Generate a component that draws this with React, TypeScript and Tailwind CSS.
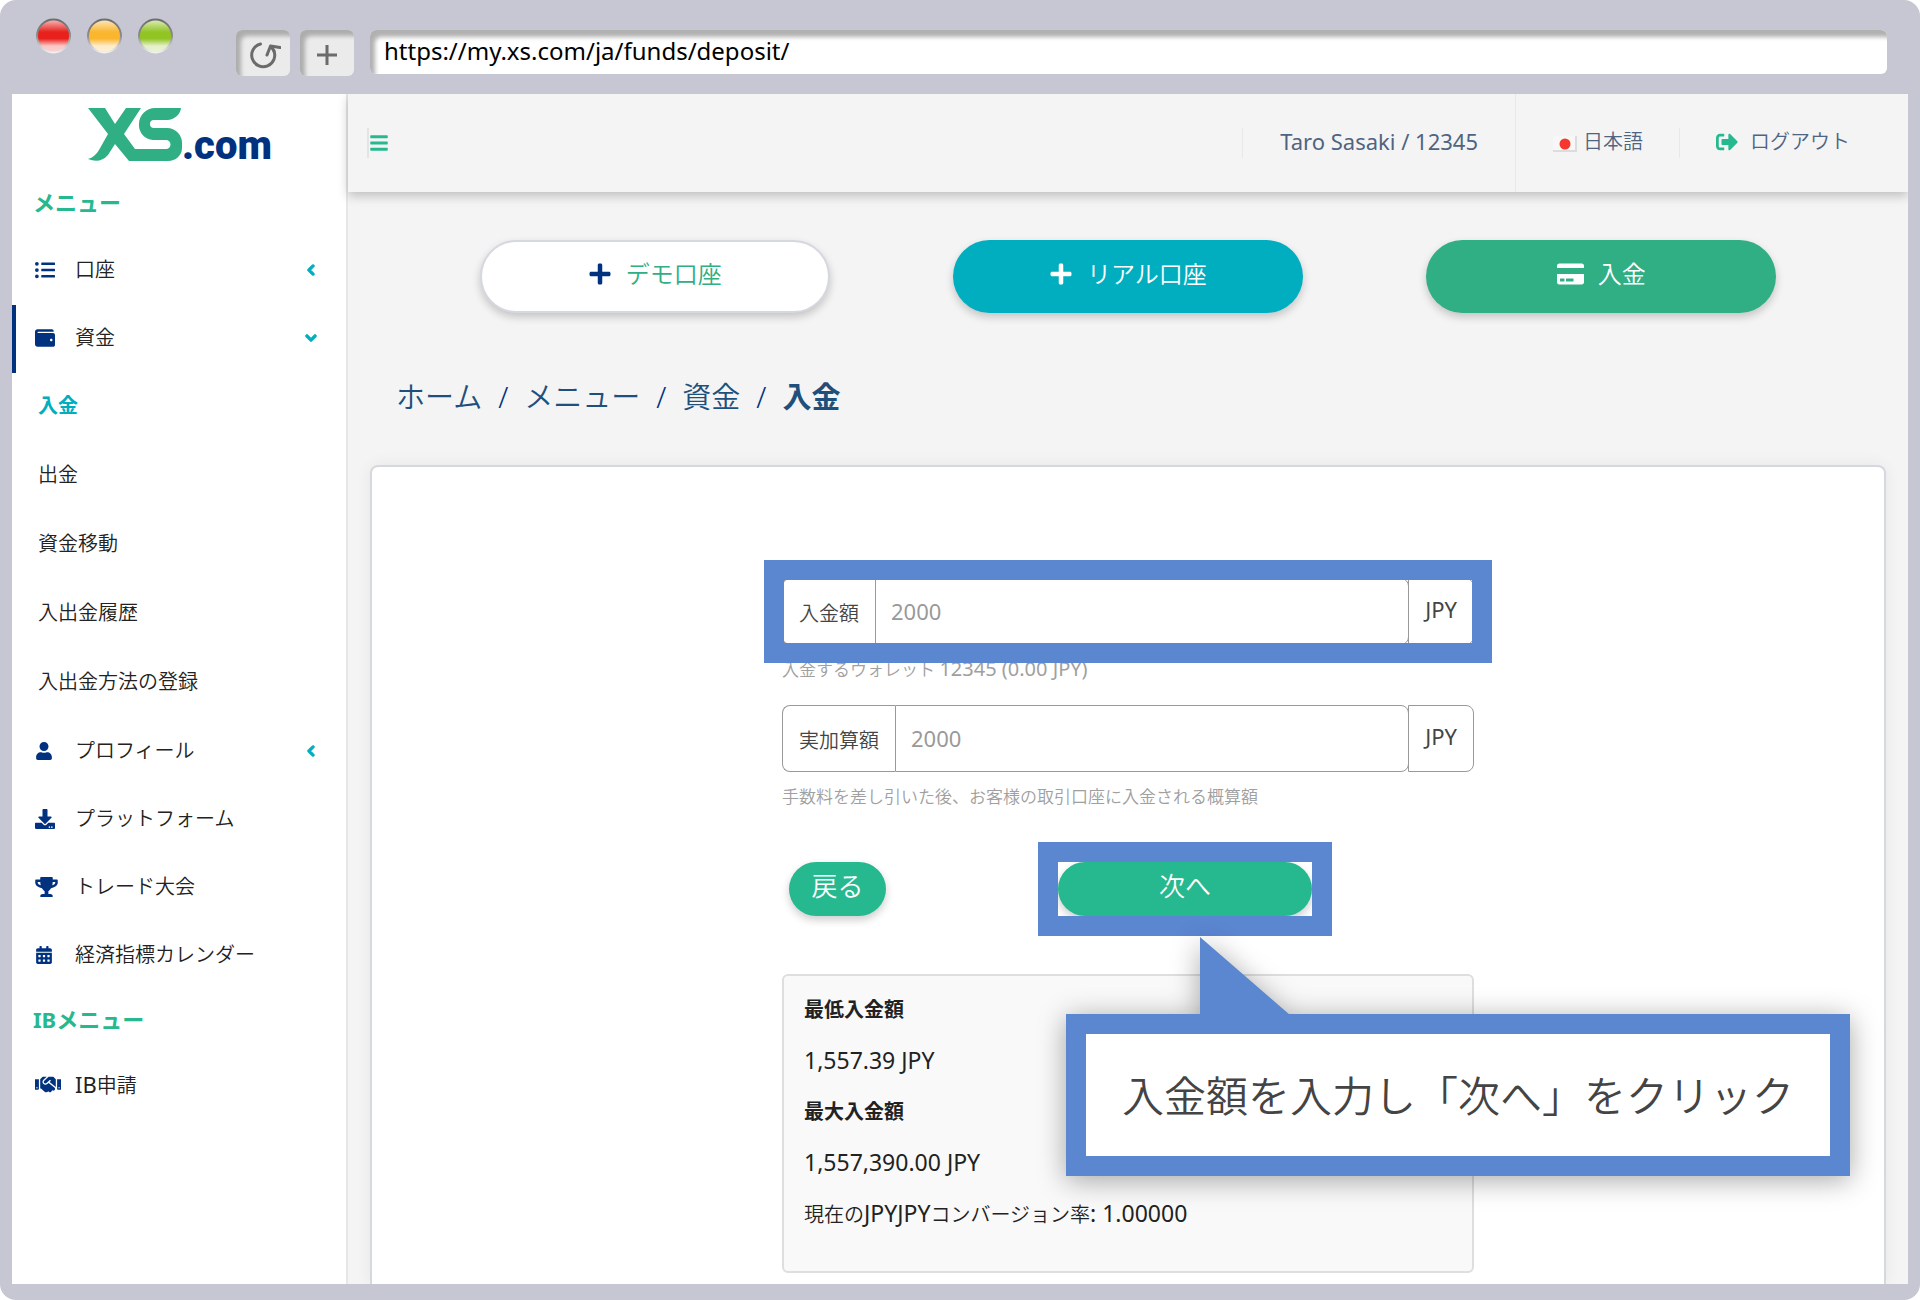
import type { ReactNode } from "react";
import {
  FaBars,
  FaCalendarAlt,
  FaChevronDown,
  FaChevronLeft,
  FaCreditCard,
  FaDownload,
  FaHandshake,
  FaListUl,
  FaPlus,
  FaSignOutAlt,
  FaTrophy,
  FaUser,
  FaWallet,
} from "react-icons/fa";

// Latin runs are set a little larger than the Japanese around them
const En = ({ children }: { children: ReactNode }) => <span className="text-[22px] font-normal">{children}</span>;
const Figure = ({ children }: { children: ReactNode }) => <span className="text-[23px] font-normal">{children}</span>;

const toolClass =
  "flex h-[46px] w-[54px] items-center justify-center rounded-md bg-[#ebebeb] shadow-[inset_5px_6px_4px_#adadad]";

const WindowBar = () => (
  <div className="flex h-[94px] items-start pr-[21px] pl-6">
    <div className="flex w-[200px] gap-4 pt-[18px]">
      <Light id="red" color="#e8211d" />
      <Light id="amber" color="#fab62f" />
      <Light id="green" color="#92c424" />
    </div>
    <div className="flex flex-1 gap-[10px] pt-[30px]">
      <button aria-label="再読み込み" className={toolClass}>
        <svg
          viewBox="0 0 32 28"
          className="mt-1 ml-1 h-7 w-8"
          fill="none"
          stroke="#6b6b6b"
          strokeWidth="3"
          strokeLinecap="round"
          strokeLinejoin="round"
        >
          <path d="M11.500 3A11.500 11.500 0 1 0 24.500 9" />
          <path d="M18 14 21.500 5 31 6.500M21.500 5 25 10" />
        </svg>
      </button>
      <button aria-label="新しいタブ" className={toolClass}>
        <svg viewBox="0 0 22 22" className="mt-1 h-[22px] w-[22px]" stroke="#6b6b6b" strokeWidth="3">
          <path d="M11 1V21M1 11H21" />
        </svg>
      </button>
      <input
        aria-label="アドレス"
        defaultValue="https://my.xs.com/ja/funds/deposit/"
        className="ml-[6px] h-11 min-w-0 flex-1 rounded-md bg-white pr-3 pb-1 pl-[14px] text-2xl font-normal text-black shadow-[inset_5px_7px_4px_#b1b1b1]"
      />
    </div>
  </div>
);

const Light = ({ id, color }: { id: string; color: string }) => (
  <svg viewBox="0 0 35 36" className="h-9 w-[35px]" aria-hidden="true">
    <defs>
      <linearGradient id={id} x1="0" y1="0" x2="0" y2="1">
        <stop offset="0" stopColor="#fff" stopOpacity=".7" />
        <stop offset=".38" stopColor="#fff" stopOpacity="0" />
        <stop offset=".58" stopColor="#fff" stopOpacity="0" />
        <stop offset=".8" stopColor="#fff" stopOpacity=".75" />
        <stop offset="1" stopColor="#fff" stopOpacity=".8" />
      </linearGradient>
      <linearGradient id={`${id}-rim`} x1="0" y1="0" x2="0" y2="1">
        <stop offset="0" stopColor="#6e6e6e" />
        <stop offset=".5" stopColor="#8d8d8d" />
        <stop offset="1" stopColor="#f0f0f0" />
      </linearGradient>
    </defs>
    <circle cx="17.500" cy="18" r="16.500" fill={color} />
    <circle cx="17.500" cy="18" r="16.500" fill={`url(#${id})`} stroke={`url(#${id}-rim)`} strokeWidth="2" />
  </svg>
);

const Logo = () => (
  <a href="#" aria-label="XS.com" className="flex h-[74px] items-start pt-[14px] pl-[76px]">
    <svg viewBox="0 0 94 54" className="h-[54px] w-[94px]" fill="#30ae84" aria-hidden="true">
      <path d="M0 0H17L27 16 38 0H53L36 26 47 41H78A4 4 0 0 0 78 32H65A15 15 0 0 1 51 16 16 16 0 0 1 67 0H93A15 13 0 0 1 79 12H66A4 4 0 0 0 66 20H79A15 15 0 0 1 94 36V40A14 13 0 0 1 80 53H41L27 36 20 47Q12 56 0 51 7 49 11 42L20 26Z" />
    </svg>
    <span className="font-[Roboto] text-[40px] leading-[76px] font-black text-[#00327f]">.com</span>
  </a>
);

type Item = { label: ReactNode; icon: ReactNode; chevron?: ReactNode; active?: boolean };

const NavRow = ({ label, icon, chevron, active }: Item) => (
  <a
    href="#"
    className={`flex h-[68px] items-center border-l-4 pr-[27px] pb-0.5 pl-[19px] ${
      active ? "border-[#00327f]" : "border-transparent"
    }`}
  >
    <span className="w-10 text-xl text-[#00327f]">{icon}</span>
    <span className="flex-1">{label}</span>
    <span className="text-base text-[#00aebf] [&_path]:stroke-current [&_path]:stroke-[60]">{chevron}</span>
  </a>
);

const accounts: Item[] = [
  { label: "口座", icon: <FaListUl />, chevron: <FaChevronLeft className="h-3 overflow-visible" /> },
  { label: "資金", icon: <FaWallet />, chevron: <FaChevronDown className="h-3 overflow-visible" />, active: true },
];

const funds = ["入金", "出金", "資金移動", "入出金履歴", "入出金方法の登録"];

const others: Item[] = [
  { label: "プロフィール", icon: <FaUser className="h-[18px] w-[18px]" />, chevron: <FaChevronLeft className="h-3 overflow-visible" /> },
  { label: "プラットフォーム", icon: <FaDownload /> },
  { label: "トレード大会", icon: <FaTrophy className="h-5 w-[23px]" /> },
  { label: "経済指標カレンダー", icon: <FaCalendarAlt className="h-[18px] w-[18px]" /> },
];

const Sidebar = () => (
  <nav className="w-[336px] shrink-0 border-r-2 border-[#e7e7e7] bg-white text-xl text-[#222]">
    <Logo />
    <h2 className="flex h-[69px] items-center pl-[21px] text-[22px] font-bold text-[#26b98f]">メニュー</h2>
    {accounts.map((item, i) => (
      <NavRow key={i} {...item} />
    ))}
    {funds.map((label) => (
      <a
        key={label}
        href="#"
        className={`flex h-[69px] items-center pb-1 pl-[26px] ${label === "入金" ? "font-bold text-[#00aebf]" : ""}`}
      >
        {label}
      </a>
    ))}
    {others.map((item, i) => (
      <NavRow key={i} {...item} />
    ))}
    <h2 className="flex h-[61px] items-center pb-0.5 pl-[21px] text-[22px] font-bold text-[#26b98f]">IBメニュー</h2>
    <NavRow label={<><En>IB</En>申請</>} icon={<FaHandshake className="h-[21px] w-[26px]" />} />
  </nav>
);

const Header = () => (
  <header className="relative flex h-[98px] items-center bg-[#f4f4f4] text-xl text-[#4f6482] shadow-[0_4px_10px_rgba(0,0,0,0.22)]">
    <button aria-label="メニューを開く" className="ml-[19px] flex h-[30px] items-center border-l-2 border-[#e4e4e4] text-xl text-[#26b98f]">
      <FaBars />
    </button>
    <div className="ml-auto flex h-full items-center">
      <span className="flex h-[30px] items-center border-l border-[#e8e8e8] px-[37px] pb-1">
        <En>Taro Sasaki / 12345</En>
      </span>
      <a href="#" className="flex h-full items-center gap-[6px] border-l border-[#e8e8e8] pr-9 pb-0.5 pl-[37px]">
        <svg viewBox="0 0 24 16" className="mt-1 h-4 w-6" aria-hidden="true">
          <path d="M0 0H24V16H0Z" fill="#dcdcdc" />
          <path d="M0 0H22V14H0Z" fill="#f7f7f7" />
          <circle cx="12" cy="8" r="5.500" fill="#f5382d" />
        </svg>
        日本語
      </a>
      <a href="#" className="flex h-[30px] items-center gap-3 border-l border-[#e8e8e8] pr-[58px] pb-0.5 pl-9">
        <FaSignOutAlt className="h-[22px] w-[22px] text-[#26b98f]" />
        ログアウト
      </a>
    </div>
  </header>
);

const actionClass =
  "flex h-[73px] w-[350px] items-center justify-center gap-[14px] rounded-full pb-1.5 text-2xl shadow-[0_4px_8px_rgba(0,0,0,0.2)]";

const Actions = () => (
  <div className="grid grid-cols-3 justify-items-center px-12">
    <button className={`${actionClass} border-2 border-[#d6d8e0] bg-white text-[#30ae84]`}>
      <FaPlus className="text-[#00327f]" />
      デモ口座
    </button>
    <button className={`${actionClass} bg-[#00aebf] text-white`}>
      <FaPlus />
      リアル口座
    </button>
    <button className={`${actionClass} bg-[#30ae84] text-white`}>
      <FaCreditCard className="h-6 w-[27px]" />
      入金
    </button>
  </div>
);

const Breadcrumb = () => (
  <nav className="flex h-10 items-center gap-4 pl-[26px] text-[29px] text-[#1f4f7b]">
    <a href="#">ホーム</a>
    <span className="text-[#00327f]">/</span>
    <a href="#">メニュー</a>
    <span className="text-[#00327f]">/</span>
    <a href="#">資金</a>
    <span className="text-[#00327f]">/</span>
    <span className="font-bold">入金</span>
  </nav>
);

const AmountField = ({ id, label, framed }: { id: string; label: string; framed?: boolean }) => (
  <div className="relative flex h-[67px] text-xl text-[#444]">
    <label htmlFor={id} className="flex items-center rounded-l-lg border border-r-0 border-[#999] px-4 pt-1">
      {label}
    </label>
    <input
      id={id}
      placeholder="2000"
      className="min-w-0 flex-1 rounded-r-lg border border-[#999] px-[15px] text-[22px] font-normal placeholder:text-[#999]"
    />
    <span className="-ml-px flex items-center rounded-r-lg border border-[#999] px-4 pb-1">
      <En>JPY</En>
    </span>
    {framed && <div className="pointer-events-none absolute -inset-[18px] border-[20px] border-[#5b86d0]" />}
  </div>
);

const Callout = () => (
  <div className="absolute top-[152px] left-2 drop-shadow-[0_4px_14px_rgba(0,0,0,0.35)]">
    <svg viewBox="0 0 90 78" className="absolute -top-[77px] left-[134px] h-[78px] w-[90px]" fill="#5b86d0" aria-hidden="true">
      <path d="M0 0V78H90Z" />
    </svg>
    <p className="flex h-[162px] w-[784px] items-center justify-center border-[20px] border-[#5b86d0] bg-white text-[42px] whitespace-nowrap text-[#444]">
      入金額を入力し「次へ」をクリック
    </p>
  </div>
);

const DepositForm = () => (
  <form className="mx-auto w-[692px]" onSubmit={(e) => e.preventDefault()}>
    <AmountField id="amount" label="入金額" framed />
    <p className="flex h-[60px] items-start pt-[10px] text-[17px] text-[#a0a0a0]">
      <span>
        入金するウォレット <span className="text-xl font-normal">12345 (0.00 JPY)</span>
      </span>
    </p>
    <AmountField id="credited" label="実加算額" />
    <p className="flex h-[90px] items-start pt-3 text-[17px] text-[#a0a0a0]">
      手数料を差し引いた後、お客様の取引口座に入金される概算額
    </p>
    <div className="flex gap-[172px] pl-[7px] text-[26px] text-white">
      <button
        type="button"
        className="h-[54px] w-[97px] rounded-full bg-[#26b98f] pb-1.5 shadow-[0_4px_8px_rgba(0,0,0,0.2)]"
      >
        戻る
      </button>
      <div className="relative z-10">
        <button type="submit" className="h-[54px] w-[254px] rounded-full bg-[#26b98f] pb-1.5 shadow-[0_4px_8px_rgba(0,0,0,0.2)]">
          次へ
        </button>
        <div className="pointer-events-none absolute -inset-5 border-[20px] border-[#5b86d0]" />
        <Callout />
      </div>
    </div>
    <div className="mt-[58px] h-[299px] rounded-md border-2 border-[#dedede] bg-[#f9f9f9] px-5 pt-2 text-xl leading-[51px] text-[#222]">
      <p className="h-[51px] font-bold">最低入金額</p>
      <p className="h-[51px]"><Figure>1,557.39 JPY</Figure></p>
      <p className="h-[51px] font-bold">最大入金額</p>
      <p className="h-[51px]"><Figure>1,557,390.00 JPY</Figure></p>
      <p className="h-[51px]">現在の<Figure>JPYJPY</Figure>コンバージョン率<Figure>: 1.00000</Figure></p>
    </div>
  </form>
);

const App = () => (
  <div className="min-h-screen bg-white font-['Noto_Sans','Noto_Sans_CJK_JP',sans-serif] font-[350]">
    <div className="flex min-h-screen flex-col rounded-2xl bg-[#c7c7d3] px-3 pb-4">
      <WindowBar />
      <div className="flex flex-1 overflow-hidden bg-[#f4f4f4]">
        <Sidebar />
        <div className="flex min-w-0 flex-1 flex-col">
          <Header />
          <main className="flex flex-1 flex-col px-[22px] pt-12">
            <Actions />
            <div className="h-16" />
            <Breadcrumb />
            <div className="mt-12 flex-1 rounded-t-lg border-2 border-b-0 border-[#d6d8e0] bg-white pt-[111px] shadow-[0_0_16px_rgba(0,0,0,0.06)]">
              <DepositForm />
            </div>
          </main>
        </div>
      </div>
    </div>
  </div>
);

export default App;
